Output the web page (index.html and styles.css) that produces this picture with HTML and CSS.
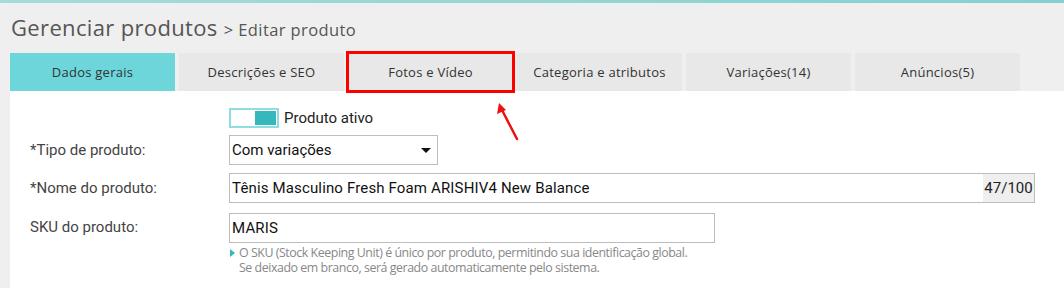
FILE: index.html
```html
<!DOCTYPE html>
<html lang="pt">
<head>
<meta charset="utf-8">
<link rel="stylesheet" href="styles.css">
</head>
<body>
<div class="topline"></div>
<div class="page">
  <h1 class="title">Gerenciar produtos <span class="crumb">&gt; Editar produto</span></h1>
  <div class="tabs">
    <div class="tab active">Dados gerais</div>
    <div class="tab">Descrições e SEO</div>
    <div class="tab highlight">Fotos e Vídeo</div>
    <div class="tab">Categoria e atributos</div>
    <div class="tab">Variações(14)</div>
    <div class="tab">Anúncios(5)</div>
  </div>
  <div class="panel">
    <div class="row row-toggle">
      <div class="label"></div>
      <div class="toggle"><span class="knob"></span></div>
      <span class="toggle-text">Produto ativo</span>
    </div>
    <div class="row row-select">
      <div class="label">*Tipo de produto:</div>
      <div class="select"><span>Com variações</span><span class="caret"></span></div>
    </div>
    <div class="row row-name">
      <div class="label">*Nome do produto:</div>
      <div class="input wide"><span class="value">Tênis Masculino Fresh Foam ARISHIV4 New Balance</span><span class="counter">47/100</span></div>
    </div>
    <div class="row row-sku">
      <div class="label">SKU do produto:</div>
      <div class="field-col">
        <div class="input sku"><span class="value">MARIS</span></div>
        <div class="help">
          <span class="help-arrow"></span>
          <p>O SKU (Stock Keeping Unit) é único por produto, permitindo sua identificação global.<br>Se deixado em branco, será gerado automaticamente pelo sistema.</p>
        </div>
      </div>
    </div>
  </div>
  <svg class="pointer" width="30" height="44" viewBox="0 0 30 44">
    <line x1="24" y1="39" x2="9" y2="10" stroke="#ee1111" stroke-width="2.5" stroke-linecap="round"/>
    <polygon points="6,3 4,14 13,10" fill="#ee1111"/>
  </svg>
</div>
</body>
</html>
```
FILE: styles.css
```css
* { box-sizing: border-box; }
html, body {
  margin: 0;
  padding: 0;
  background: #efefef;
  width: 1064px;
  height: 288px;
  overflow: hidden;
}
.topline {
  height: 3px;
  background: linear-gradient(90deg, #a6dbdb, #84d0d0);
}
.page {
  position: relative;
  padding-left: 10px;
}
.title {
  margin: 0;
  padding: 9px 0 0 1px;
  height: 50px;
  font-family: "Open Sans", sans-serif;
  font-weight: normal;
  font-size: 22px;
  color: #555;
  letter-spacing: 0.35px;
  line-height: 30px;
}
.crumb {
  font-size: 16.5px;
  color: #555;
  letter-spacing: 0.4px;
}
.tabs {
  display: flex;
  gap: 4px;
  height: 38px;
}
.tab {
  width: 165px;
  background: #e8e8e8;
  display: flex;
  align-items: center;
  justify-content: center;
  font-family: "Open Sans", sans-serif;
  font-size: 13px;
  letter-spacing: 0.25px;
  color: #333;
}
.tab.active {
  background: #6dd6da;
}
.tab.highlight {
  outline: 3px solid #ff0000;
  outline-offset: -1px;
  position: relative;
}
.panel {
  background: #fff;
  height: 197px;
  padding: 17px 0 0 20px;
  font-family: Roboto, sans-serif;
}
.row {
  display: flex;
  align-items: center;
}
.label {
  width: 199px;
  flex: none;
  font-size: 15px;
  color: #444;
}
.row-toggle { height: 20px; }
.toggle {
  width: 50px;
  height: 20px;
  border: 2px solid #8fdde0;
  display: flex;
  justify-content: flex-end;
  align-items: center;
  padding: 1px;
}
.knob {
  width: 21px;
  height: 14px;
  background: #35b8bc;
}
.toggle-text {
  margin-left: 5px;
  font-size: 15px;
  color: #222;
}
.row-select { margin-top: 7px; }
.select {
  width: 209px;
  height: 30px;
  border: 1px solid #bdbdbd;
  display: flex;
  align-items: center;
  justify-content: space-between;
  padding: 0 4px 0 2px;
  font-size: 15px;
  color: #111;
}
.caret {
  width: 0;
  height: 0;
  border-left: 5px solid transparent;
  border-right: 5px solid transparent;
  border-top: 5px solid #111;
  margin-right: 2px;
}
.row-name { margin-top: 8px; }
.input {
  height: 30px;
  border: 1px solid #bdbdbd;
  display: flex;
  align-items: stretch;
  font-size: 15px;
  color: #111;
}
.input .value {
  flex: 1;
  display: flex;
  align-items: center;
  padding-left: 2px;
  letter-spacing: 0.15px;
}
.input.wide { width: 806px; }
.counter {
  background: #efefef;
  width: 51px;
  display: flex;
  align-items: center;
  justify-content: center;
  font-size: 15px;
  color: #222;
}
.row-sku {
  margin-top: 10px;
  align-items: flex-start;
}
.row-sku .label { line-height: 28px; }
.field-col { display: flex; flex-direction: column; }
.input.sku { width: 486px; }
.help {
  display: flex;
  align-items: flex-start;
  margin-top: 2px;
}
.help-arrow {
  width: 0;
  height: 0;
  border-top: 4px solid transparent;
  border-bottom: 4px solid transparent;
  border-left: 5px solid #35b8bc;
  margin: 4px 4px 0 1px;
}
.help p {
  margin: 0;
  font-family: "Open Sans", sans-serif;
  font-size: 12.4px;
  line-height: 15px;
  color: #888;
  letter-spacing: -0.45px;
}
.pointer {
  position: absolute;
  left: 493px;
  top: 97px;
}
```
